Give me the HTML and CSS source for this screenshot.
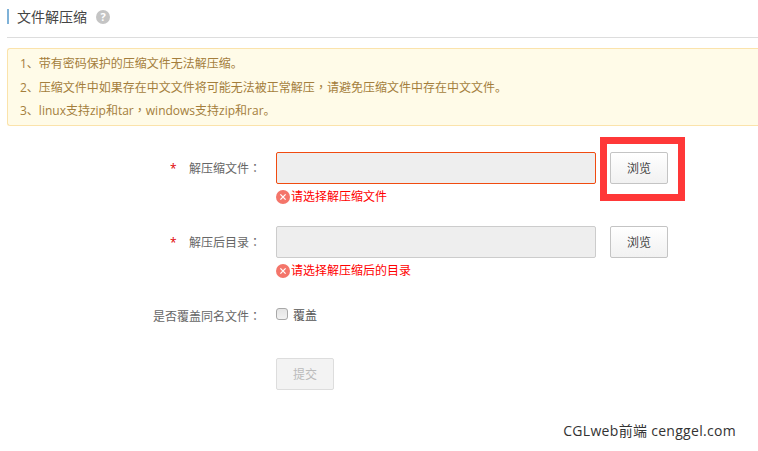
FILE: index.html
```html
<!DOCTYPE html>
<html>
<head>
	<title>文件解压缩</title>
	<meta charset="utf-8">
	<link rel="stylesheet" href="styles.css">
</head>
<body>
	<div class="page-head">
		<h2 class="page-title">文件解压缩</h2>
		<span class="help-icon">?</span>
	</div>
	<div class="tips">
		<p>1、带有密码保护的压缩文件无法解压缩。</p>
		<p>2、压缩文件中如果存在中文文件将可能无法被正常解压<span class="punct">，</span>请避免压缩文件中存在中文文件。</p>
		<p>3、linux支持zip和tar<span class="punct">，</span>windows支持zip和rar。</p>
	</div>
	<form class="form">
		<div class="form-row row-file">
			<label class="form-label"><i class="star">*</i>解压缩文件<span class="punct">：</span></label>
			<div class="form-field">
				<div class="field-line">
					<input class="text-input input-error" type="text" disabled>
					<button class="btn" type="button">浏览</button>
					<span class="mark-box"></span>
				</div>
				<div class="error-msg">
					<svg class="error-icon" viewBox="0 0 14 14"><circle cx="7" cy="7" r="7" fill="#f4756a"/><path d="M4.4 4.4l5.2 5.2M9.6 4.4l-5.2 5.2" stroke="#fff" stroke-width="1.3" fill="none"/></svg>请选择解压缩文件
				</div>
			</div>
		</div>
		<div class="form-row row-dir">
			<label class="form-label"><i class="star">*</i>解压后目录<span class="punct">：</span></label>
			<div class="form-field">
				<div class="field-line">
					<input class="text-input" type="text" disabled>
					<button class="btn" type="button">浏览</button>
				</div>
				<div class="error-msg">
					<svg class="error-icon" viewBox="0 0 14 14"><circle cx="7" cy="7" r="7" fill="#f4756a"/><path d="M4.4 4.4l5.2 5.2M9.6 4.4l-5.2 5.2" stroke="#fff" stroke-width="1.3" fill="none"/></svg>请选择解压缩后的目录
				</div>
			</div>
		</div>
		<div class="form-row row-check">
			<label class="form-label">是否覆盖同名文件<span class="punct">：</span></label>
			<div class="form-field">
				<label class="check"><span class="check-box"></span>覆盖</label>
			</div>
		</div>
		<div class="form-row row-submit">
			<div class="form-label"></div>
			<div class="form-field">
				<button class="btn btn-disabled" type="button">提交</button>
			</div>
		</div>
	</form>
	<div class="watermark">CGLweb前端 cenggel.com</div>
</body>
</html>
```

FILE: styles.css
```css
html, body {
	margin: 0;
	padding: 0;
}
body {
	width: 758px;
	height: 451px;
	overflow: hidden;
	background: #fff;
	font-family: "Open Sans", "Noto Sans CJK SC", sans-serif;
	font-size: 12px;
	color: #666;
}
.punct {
	font-family: "Noto Sans CJK TC", sans-serif;
}
.page-head {
	display: flex;
	align-items: flex-start;
	height: 28px;
	margin: 0 0 10px 7px;
	padding-top: 9px;
	border-bottom: 1px solid #ddd;
}
.page-title {
	margin: 0;
	padding-left: 8px;
	height: 15px;
	line-height: 15px;
	border-left: 2px solid #7fb2d8;
	font-size: 14px;
	font-weight: normal;
	color: #444;
}
.help-icon {
	width: 14px;
	height: 14px;
	margin: 1px 0 0 9px;
	border-radius: 50%;
	background: #c4c4c4;
	color: #fff;
	font-size: 11px;
	font-weight: bold;
	line-height: 14px;
	text-align: center;
}
.tips {
	box-sizing: border-box;
	height: 78px;
	margin-left: 7px;
	padding: 3px 0 0 12px;
	background: #fffbe8;
	border: 1px solid #fbe3ab;
	border-right: 0;
	border-radius: 3px 0 0 3px;
	color: #a47e3c;
}
.tips p {
	margin: 0;
	height: 23px;
	line-height: 23px;
	white-space: nowrap;
}
.form {
	padding-top: 26px;
}
.form-row {
	display: flex;
}
.form-label {
	position: relative;
	width: 261px;
	height: 32px;
	flex: none;
	margin-right: 15px;
	line-height: 32px;
	text-align: right;
	color: #666;
}
.star {
	position: absolute;
	left: 170px;
	top: 1px;
	font-style: normal;
	color: #e00000;
}
.field-line {
	position: relative;
	display: flex;
	gap: 14px;
}
.text-input {
	box-sizing: border-box;
	width: 320px;
	height: 32px;
	margin: 0;
	padding: 0;
	background: #eee;
	border: 1px solid #ccc;
	border-radius: 2px;
}
.input-error {
	border-color: #f04b10;
}
.btn {
	box-sizing: border-box;
	width: 58px;
	height: 32px;
	padding: 0;
	background: linear-gradient(#fff, #f1f1f1);
	border: 1px solid #c4c4c4;
	border-radius: 2px;
	font-family: inherit;
	font-size: 12px;
	color: #444;
}
.btn-disabled {
	background: #f3f3f3;
	border-color: #ddd;
	color: #bbb;
}
.mark-box {
	position: absolute;
	left: 324px;
	top: -15px;
	box-sizing: border-box;
	width: 85px;
	height: 64px;
	border: 7px solid #ff3838;
}
.error-msg {
	display: flex;
	align-items: center;
	height: 14px;
	margin-top: 6px;
	line-height: 14px;
	color: #f00;
}
.error-icon {
	width: 14px;
	height: 14px;
	margin-right: 1px;
}
.row-dir {
	margin-top: 22px;
}
.row-check {
	margin-top: 22px;
}
.check {
	display: flex;
	align-items: flex-start;
	height: 32px;
	line-height: 32px;
	color: #555;
}
.check-box {
	box-sizing: border-box;
	width: 12px;
	height: 12px;
	margin: 8px 5px 0 0;
	background: linear-gradient(#e4e4e4, #f2f2f2);
	border: 1px solid #a8a8a8;
	border-radius: 3px;
}
.row-submit {
	margin-top: 26px;
}
.watermark {
	margin: 33px 22px 0 0;
	line-height: 16px;
	text-align: right;
	font-size: 14px;
	letter-spacing: 0.3px;
	color: #333;
}
```
